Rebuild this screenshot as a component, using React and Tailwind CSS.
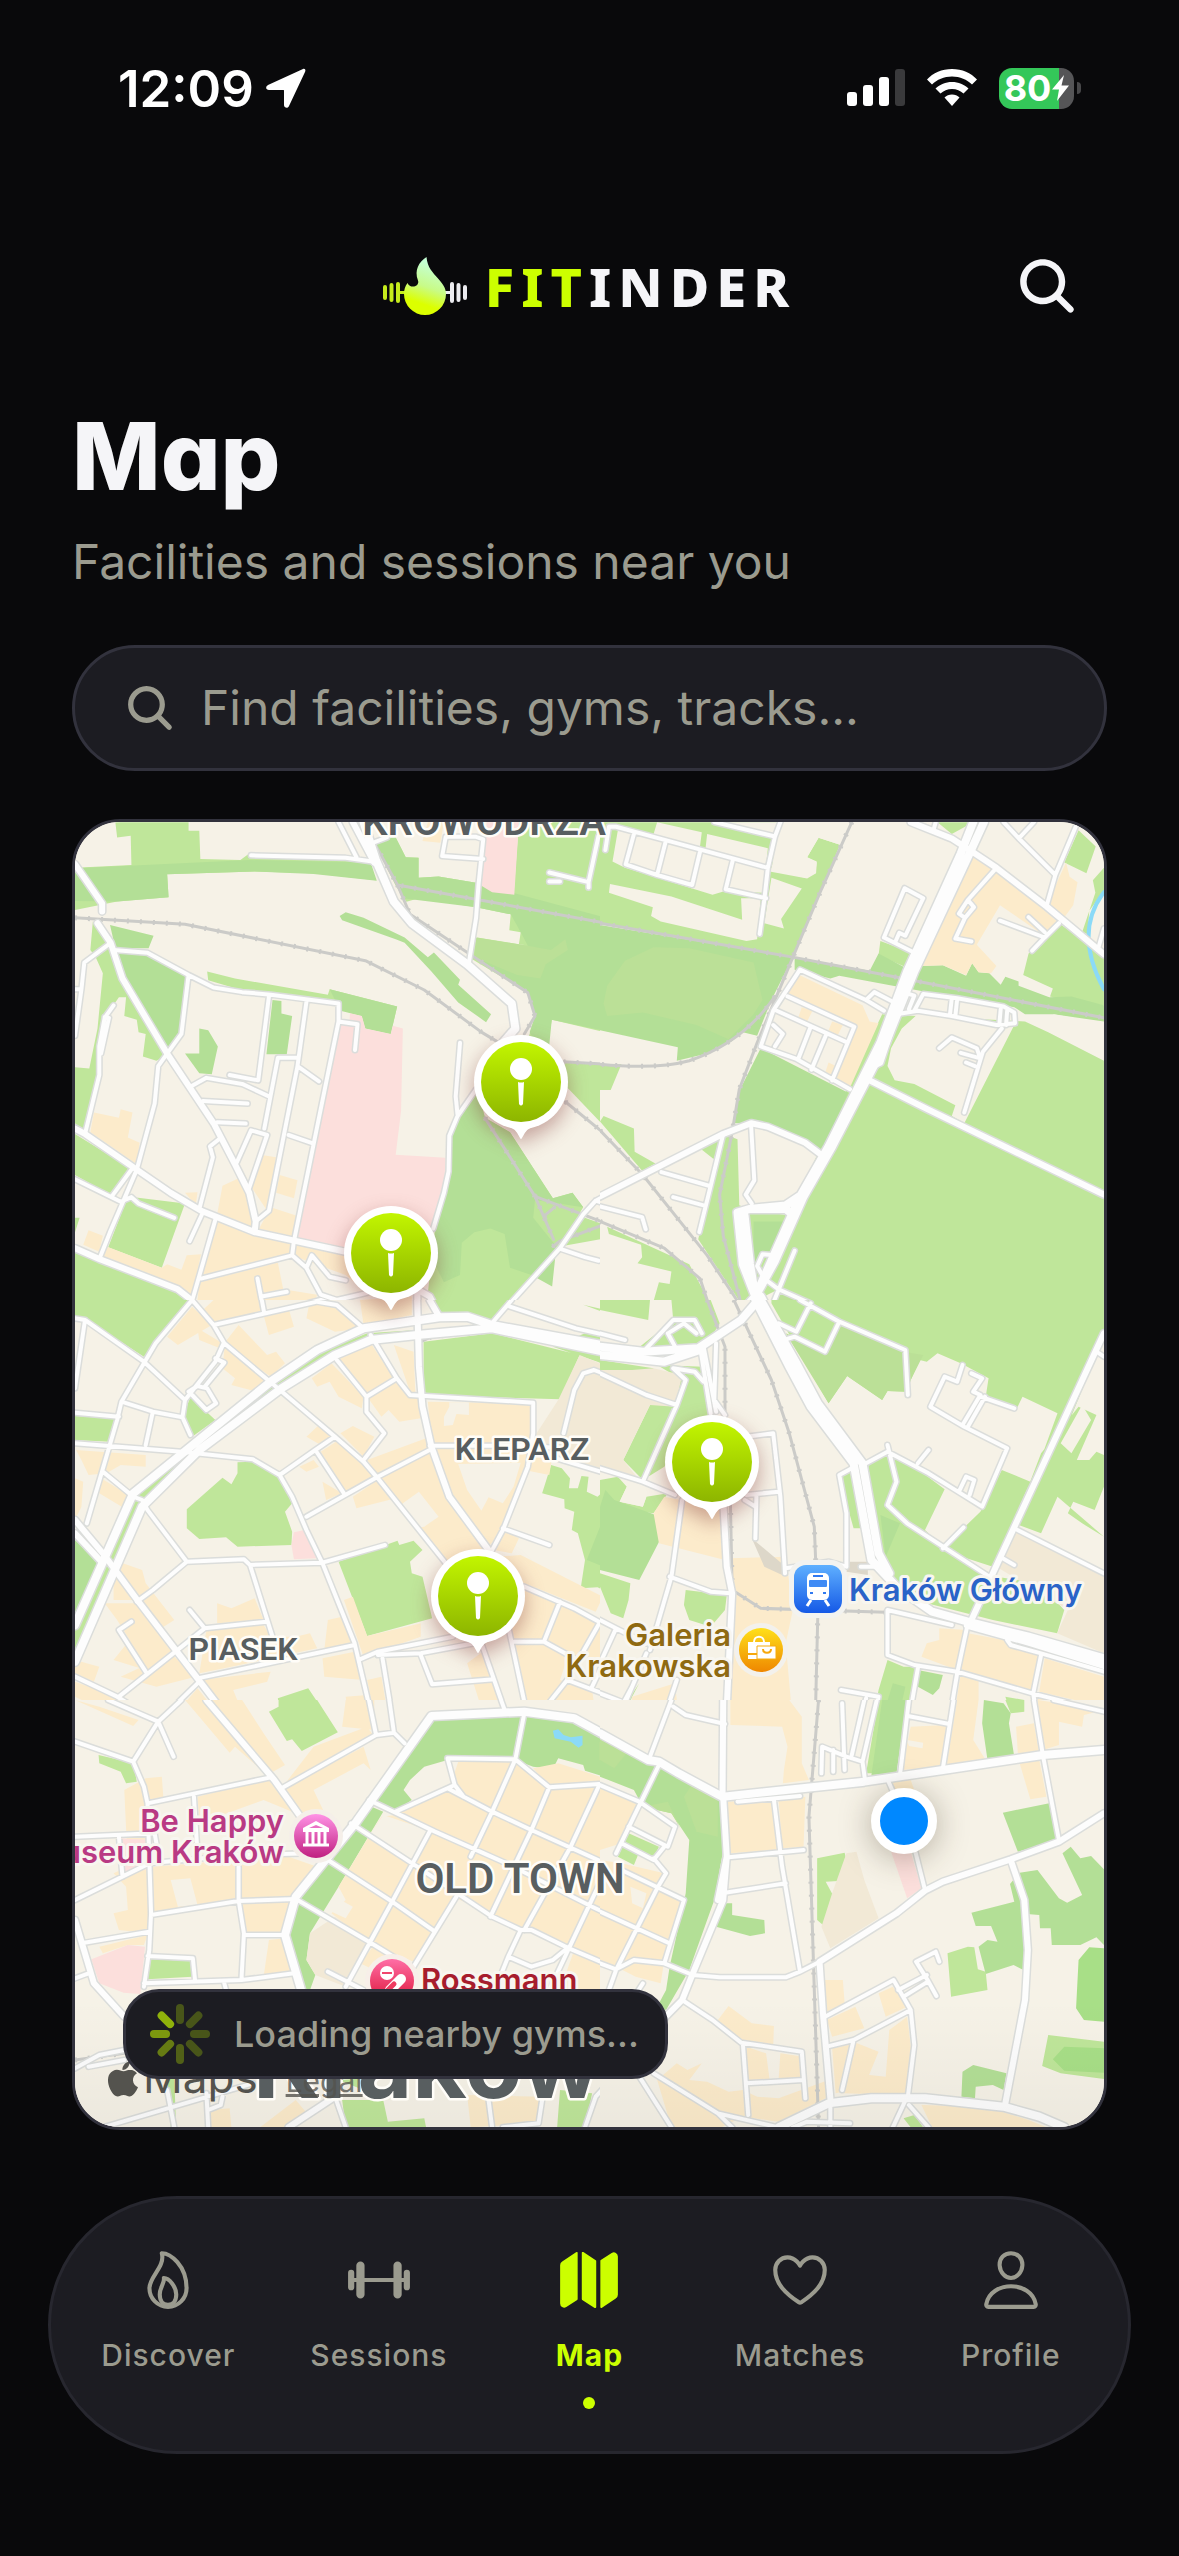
import {
  IoBarbellOutline,
  IoFlameOutline,
  IoHeartOutline,
  IoLogoApple,
  IoMap,
  IoPersonOutline,
  IoSearch,
} from 'react-icons/io5'

const TABS = [
  { label: 'Discover', Icon: IoFlameOutline },
  { label: 'Sessions', Icon: IoBarbellOutline },
  { label: 'Map', Icon: IoMap, active: true },
  { label: 'Matches', Icon: IoHeartOutline },
  { label: 'Profile', Icon: IoPersonOutline },
]

// Map space: x 75..1104, y 822..2127
const MAP = { x: 75, y: 822, w: 1029, h: 1305 }

const GYMS = [
  { id: 'north', x: 521, y: 1082 },
  { id: 'west', x: 391, y: 1253 },
  { id: 'kleparz', x: 712, y: 1462 },
  { id: 'piasek', x: 478, y: 1596 },
]

// Each tile has its own drawing units; later tiles cover the overlap of earlier ones.
const TILES = [
  {
    id: 'nw',
    x: 60,
    y: 800,
    w: 560,
    h: 560,
    units: '0 0 1568 1568',
    green: `M155 62L360 62 360 86 390 86 393 165 505 168 530 150 830 160 885 225 710 205 545 200 300 208 304 272 160 284 42 308 42 190 200 182 198 100 160 105Z
      M92 340L145 400 180 510 300 715 270 730 232 718 240 655 220 650 215 615 180 605 185 552 165 552 125 610 105 700 110 760 72 935 42 905 42 748 82 752 105 640 120 485 100 440 85 420Z
      M412 480L490 500 750 545 755 530 944 578 926 655 855 640 845 605 812 597 780 570 590 545 500 530 415 505Z
      M880 120L940 105 968 160 1004 162 1004 218 1060 214 1165 232 1270 265 1285 62 1568 62 1568 660 1377 615 1365 685 1365 735 1568 740 1568 755 1540 812 1520 812 1525 885 1568 905 1568 960 1425 810 1300 700 1330 610 1310 540 1145 440 1168 385 1310 408 1285 403 1290 370 1258 365 1262 320 1165 300 1005 275 970 285 940 240Z
      M1165 800L1190 890 1260 930 1380 1115 1435 1100 1465 1140 1400 1250 1220 1460 1060 1440 1030 1380 1050 1200 1080 1080 1090 940Z
      M1330 1120L1568 1205 1540 1225 1400 1250Z M1465 1412L1568 1437 1568 1452Z
      M42 935L195 1030 140 1105 42 1050Z M190 1110L350 1130 285 1310 135 1252Z M42 1170L55 1170 42 1210Z M42 1265L325 1380 365 1410 235 1568 60 1450 42 1445Z
      M1015 1500L1205 1490 1568 1568 1015 1568Z M700 1555L850 1490 1000 1470 1000 1495 870 1518 760 1568 680 1568Z`,
    dark: `M75 190L530 168 870 175 887 226 710 207 545 200 300 208 304 272 160 284 42 283 42 192Z
      M150 430L245 432 360 495 340 655 305 708 235 600 175 500Z M140 350L262 380 248 415 155 415Z
      M390 640L415 645 442 690 425 768 390 765 350 710 390 710Z M755 530L944 578 926 655 855 640 845 605 785 590Z
      M595 560L620 563 620 598 650 605 635 712 578 712Z
      M783 325L800 314 850 330 965 385 1030 440 1047 427 1120 503 1115 517 1207 600 1193 622 1115 567 1040 480 965 400 940 390 790 337Z
      M880 120L915 105 940 105 968 160 1004 162 1004 218 1060 214 1165 232 1568 340 1568 655 1377 615 1365 735 1315 650 1330 605 1310 535 1165 445 1310 408 1290 370 1262 320 1165 300 960 275Z
      M1165 800L1190 890 1260 930 1380 1115 1435 1100 1465 1140 1330 1120 1325 1170 1390 1250 1378 1362 1320 1330 1260 1310 1245 1215 1205 1200 1160 1210 1125 1240 1120 1330 1075 1350 1050 1300 1050 1200 1080 1080 1090 940Z`,
    soft: `M1165 385L1310 408 1375 420 1415 390 1422 420 1360 460 1345 500 1280 490 1160 440Z`,
    pink: `M1195 62L1285 62 1272 265 1210 258 1180 240Z
      M785 630L810 630 812 597 845 605 855 640 926 655 932 632 960 640 955 870 940 993 1080 1002 1075 1080 1040 1200 900 1270 790 1253 665 1225Z`,
    block: `M95 875L165 890 170 866 203 875 190 945 223 960 215 1020 85 930Z M455 1080L520 1050 545 1165 545 1205 440 1160Z
      M570 995L605 1000 580 1150 530 1075Z M615 1050L665 1065 655 1115 605 1100Z M590 1140L665 1165 655 1225 555 1205Z
      M435 1175L660 1235 800 1265 860 1380 800 1330 690 1290 650 1275 395 1340Z M390 1350L610 1295 625 1370 720 1385 715 1400 430 1470 385 1400Z
      M80 1205L120 1220 110 1265 65 1245Z M130 1250L285 1310 300 1300 340 1315 355 1275 395 1272 370 1385 115 1290Z M350 1100L385 1098 380 1135Z
      M300 1490L380 1420 420 1470 330 1525Z M390 1480L420 1470 600 1420 650 1440 650 1480 590 1500 570 1440 510 1450 520 1500 600 1560 620 1568 540 1568 430 1530Z
      M690 1430L760 1405 840 1475 770 1495 700 1470Z M840 1400L985 1390 985 1440 860 1470 780 1410Z M1000 1130L1020 1108 1055 1115 1045 1170 1000 1180Z
      M850 1568L940 1520 985 1540 985 1568Z M880 62L905 62 900 100Z M1030 62L1075 62 1065 120 1015 115Z`,
    rail: `M42 330L350 348 855 450 1020 532 1180 650 1230 680 M1190 890L1330 1110 1382 1230 M1415 845L1568 970 M880 120L945 238 1568 352
      M945 238L980 320 1310 540 1330 605 1300 655 M1330 1110L1568 1200 M1410 733L1568 742 M1380 1250L1400 1235 1520 1190 M1355 1165L1385 1140`,
    minor: `M142 400L68 455 60 530 42 660M42 530L60 530 M150 420L245 428 360 490 430 525 510 538 590 545 780 570 780 620 655 1235
      M360 490L340 655 300 710 275 745 265 850 215 1035 140 1210 110 1285 M150 575L125 610 110 690 110 770 70 935 M125 608L137 610 115 710
      M585 550L555 785 475 770M370 800L410 778 510 795 585 830 M690 565L665 745 585 1150 548 1180 M780 620L833 628 826 700
      M665 722L610 722 572 920M665 745L725 788 M400 843L525 850M440 902L520 906M640 938L710 962
      M445 950L420 970 428 1000 390 1145M400 1155L363 1235 M495 1015L535 925 580 938 530 1085 M200 1035L145 1110M42 1062L170 1125 200 1112 220 1130 320 1170
      M435 1175L385 1350 372 1395 M655 1235L650 1275 395 1340 M650 1275L690 1310 730 1385 775 1400 860 1380 M690 1310L705 1275 755 1335 800 1345
      M553 1340L572 1440M565 1390L635 1377 M420 1472L572 1440 730 1400 775 1415 850 1480 M372 1405L420 1472 455 1530 500 1568 M372 1405L270 1520 235 1568
      M42 1450L70 1460 50 1568M70 1460L220 1568 M455 1530L430 1568 M535 155L800 162 875 172M780 62L830 160 M870 122L915 105
      M1145 455L1165 330 1172 235 1185 110 1165 103M1185 165L1070 157 1080 103 1165 103 M1120 680L1108 830 1113 880
      M1165 810L1113 885 1090 940 1088 1040 1075 1100 1045 1200 M1370 203L1480 230 1508 100M1480 230L1480 245M1370 228L1400 228M1530 140L1545 95
      M1568 1085L1500 1122 1465 1160 1400 1255 1215 1460M1405 1258L1470 1280 1508 1290M1500 1122L1568 1145 M1262 1412L1445 1478 1568 1510
      M850 1480L885 1520 915 1568`,
    medium: `M42 180L118 290 118 312 M105 345L142 400 175 500 300 710 430 905 490 1020 530 1100 548 1180 545 1210 M42 920L70 935 215 1035 310 1100 395 1150 545 1210 800 1265
      M42 1255L110 1285 330 1370 368 1400 M1000 1370L1035 1390 1062 1440M1000 1350L1003 1568 M820 62L880 175`,
    major: `M850 62L885 170 935 285 985 345 1140 460 1265 570 1275 640 1240 680 M1568 1530L1215 1465 1140 1448 1000 1455 850 1485 720 1540 660 1568
      M1215 1480L1000 1500 870 1520 770 1568 M1568 1548L1215 1478`,
  },
  {
    id: 'ne',
    x: 600,
    y: 800,
    w: 560,
    h: 560,
    units: '0 0 1568 1568',
    green: `M0 62L505 62 500 150 475 200 580 220 605 205 607 175 580 160 612 106 672 125 540 440 0 345Z
      M1185 490L1200 430 1285 345 1411 435 1411 575 1320 565 1260 550 1268 528Z M785 395L878 430 860 470 780 435Z
      M1300 175L1362 205 1388 130 1340 85Z M1411 190L1380 225 1387 260 1350 370 1365 375 1370 310 1411 255Z M945 62L1045 62 985 95Z
      M790 600L1190 620 1255 650 1411 730 1411 1568 870 1568 850 1540 500 1370 440 1400 560 1100 700 790Z
      M345 935L385 950 390 1135 430 1150 545 1165 490 1280 440 1400 395 1410 275 1230Z M0 900L10 885 95 920 97 985 155 1018 118 1038Z M280 975L345 935 318 1005Z M0 740L60 740 30 812 0 812Z
      M20 1195L250 1300 330 1450 300 1490 250 1450 205 1450 130 1530 0 1520 0 1510 70 1510 72 1460 0 1440 0 1425 135 1455 165 1350 195 1355 200 1320 105 1297 118 1280 115 1245 25 1215Z`,
    dark: `M0 350L540 440 480 560 440 660 400 650 370 675 300 710 215 730 218 692 0 645Z
      M545 440L755 478 780 430 855 470 895 465 960 463 1025 492 1042 457 1060 482 1090 485 1122 517 1135 495 1172 508 1172 520 1258 552 1320 550 1411 575 1411 620 1270 600 1190 600 1160 580 900 535 820 520 670 492 645 500 545 475Z
      M450 695L695 820 620 985 425 905 375 905 390 815Z M430 1180L520 1180 490 1270 455 1270 430 1300Z`,
    soft: `M10 570L20 520 70 450 150 412 250 415 430 455 455 560 430 600 360 670 270 630 120 595 20 605Z M480 1420L500 1370 670 1460 850 1545 855 1568 560 1568Z`,
    land: `M35 172L50 85 300 140 465 185 455 260 350 255 315 265 70 190Z M160 62L285 90 280 130 150 95Z M300 95L470 135 465 185 295 140Z M310 62L505 62 495 100Z
      M500 62L700 62 672 125 612 106 580 160 607 172 603 205 575 218 480 195Z M28 235L200 270 398 335 395 275 450 275 440 390 410 395 170 340 143 325 148 300 25 260Z M480 218L565 248 507 333 515 360 460 345Z
      M845 640L900 590 1160 630 1020 905 985 885 995 855 880 795 825 785 805 745 815 695Z M1255 648L1270 600 1411 625 1411 728Z M392 960L423 910 600 985 560 1105 430 1135 393 1100Z`,
    block: `M1040 155L1110 192 1280 340 1245 380 1120 295 1055 405 1110 465 1095 485 1060 482 1042 457 1025 490 960 463 895 465Z
      M1305 175L1315 215 1337 230 1325 295 1295 335 1250 295Z M558 490L735 575 755 620 780 625 700 805 655 785 705 640 525 545Z
      M565 580L595 590 580 620 555 610Z M650 620L680 630 665 660 640 645Z M640 735L660 745 645 775 630 765Z`,
    rail: `M705 62L620 250 540 440 440 680 390 810 370 930 335 1105 345 1220 395 1410 M0 345L540 440 835 497 1411 610 M490 550Q400 680 250 730Q160 755 0 740
      M0 925L120 1050 300 1275 390 1410 450 1568 M0 1180L180 1255 280 1340 320 1460 350 1568`,
    creek: `M1411 258Q1325 370 1411 530`,
    minor: `M25 75L45 75 230 125 470 190M25 75L15 140 M95 95L72 180 160 210 258 238 280 145M183 120L160 210M372 168L352 250 465 275M320 62L490 102
      M505 62L490 102 470 190 460 280 447 375 M885 430L795 385 853 247 905 275 855 380 838 372 828 395
      M935 80L940 62M1130 62L1175 110 1275 210M1175 105L1215 62M1332 75L1275 210 1250 298 M1110 190L1030 280 1005 318 1022 330 1047 300 1030 280M1022 330L995 388 1040 396
      M1120 338L1245 385 1285 345M1200 328L1245 370M1245 385L1210 422M1395 415L1411 360
      M795 590L745 560 560 475 485 590 450 690 550 725 700 810M745 560L768 538 820 565 M525 550L712 635 650 785M495 590L690 678M590 635L555 725M632 660L592 755M485 630L512 655 490 690
      M830 600L890 590 985 605 1110 630 1162 625 1160 595 1130 578 1000 555 905 543 880 590M985 555L980 600M1000 558L995 605M1122 585L1118 630M1140 590L1137 630M855 540L880 548 865 585
      M1125 640L1072 705 1020 875 M950 695L985 665 1055 695 1065 725M1010 708L1060 722M1025 735L1050 745 M423 910L432 1065 408 1105 425 1130
      M345 935L310 1080 278 1210M172 1042L305 1080M205 1112L290 1135 M0 1138L118 1168 128 1202
      M545 1262L478 1425M500 1370L590 1410 670 1460 855 1540 858 1568M590 1410L550 1485 495 1465M670 1460L630 1545 545 1508 515 1515 M490 1275L455 1272 440 1305 460 1340 500 1370
      M130 1535L205 1455 265 1455 285 1500 290 1568M190 1495L235 1465 270 1490 280 1520M190 1495L210 1535M0 1500L70 1512`,
    medium: `M870 62L985 108 1035 140 1110 190 1250 298 1411 432 M745 780L915 865 1411 1105 M0 1110L345 935 423 905 470 915 575 960 615 990 M830 600L785 735 765 745 M1411 1500L1380 1568`,
    major: `M1045 62L1010 150 860 480 785 680 640 970 560 1110 480 1290 435 1390 M1075 62L1030 160 880 480 800 680 650 970 570 1110 490 1290 435 1390 380 1450 280 1530 180 1545
      M435 1390L480 1470 530 1568M450 1390L545 1568 M565 1105L520 1135 420 1145 385 1155 400 1300 435 1390M405 1165L420 1300 435 1390M420 1145L520 1145 545 1165 M0 1535L130 1548 270 1540`,
  },
  {
    id: 'w',
    x: 60,
    y: 1300,
    w: 560,
    h: 460,
    units: '0 0 1568 1380',
    green: `M42 0L365 0 235 170 70 55 42 50Z M42 348L160 355 140 425 42 420Z M365 290L435 360 370 410 345 350Z
      M497 487L540 485 610 530 650 610 630 635 650 695 648 735 497 740 465 712 390 717 355 685 355 628 455 533 480 553 497 520Z
      M780 785L945 722 950 735 990 722 1015 750 980 785 985 820 1015 830 1042 955 860 1008Z M1018 125L1210 100 1455 165 1400 298 1018 285Z
      M590 260L720 160 860 100 1210 75 1000 100 880 115 620 265 380 460 230 610 42 1060 42 980 200 600Z M1050 0L1260 0 1210 70 1062 50Z
      M585 1235L612 1220 610 1195 695 1165 725 1213 737 1210 778 1297 677 1353 650 1318 635 1323Z
      M1375 495L1405 505 1428 535 1425 565 1450 565 1460 528 1480 530 1475 575 1505 590 1528 568 1545 600 1568 550 1568 950 1540 935 1550 885 1505 862 1458 865 1470 780 1450 700 1433 690 1440 635 1413 625 1412 598 1350 580Z
      M1465 14L1568 40 1568 55Z M1470 100L1568 125 1568 215 1505 185 1380 140Z M108 1365L160 1380 110 1380Z`,
    dark: `M42 720L115 790 42 950Z M1568 530L1475 780 1568 820Z M1040 1255L1295 1245 1440 1260 1568 1340 1568 1380 940 1380Z`,
    pink: `M655 697L685 690 718 775 655 778 648 735Z`,
    tan: `M1455 165L1568 215 1568 520 1430 480 1310 440 1395 300Z`,
    water: `M1380 1290L1395 1288 1410 1305 1430 1312 1463 1305 1463 1335 1452 1343 1430 1325 1385 1315Z`,
    block: `M430 0L560 0 565 35 430 70 400 30Z M385 85L455 130 580 240 550 275 480 255 490 235 455 205 460 150 390 120Z M370 20L425 75 330 135 300 110Z
      M460 130L500 75 580 165 605 155 630 190 590 230Z M570 45L640 25 655 80 585 105Z M700 0L740 0 850 85 770 95 690 55Z M840 0L985 0 985 45 850 75Z
      M775 180L870 130 935 235 860 285Z M705 235L760 190 850 290 845 325 780 290 755 245 720 260Z M860 290L940 245 975 290 1005 290 1010 355 950 365 920 330 900 350Z M935 135L990 155 995 280 980 275Z
      M690 410L725 375 765 410 730 435Z M785 400L820 378 880 410 850 470Z M860 480L1025 415 1040 450 890 525Z M730 455L780 420 850 480 885 525 800 575Z M735 545L790 580 745 600Z M820 590L890 540 940 595 830 625Z
      M895 530L1035 460 1085 580 1200 745 1140 830 1080 780Z M1030 305L1325 310 1320 430 1040 430Z M1040 440L1330 430 1380 460 1370 525 1300 510 1240 690 1200 740 1100 600Z
      M1225 770L1290 765 1520 890 1500 935 1300 850Z M1290 860L1400 905 1355 1020 1260 1020Z M1400 910L1568 990 1568 1080 1430 1070 1360 1025Z
      M1275 1030L1350 1030 1420 1075 1400 1140 1490 1170 1495 1210 1525 1230 1500 1265 1310 1220Z M1140 1090L1190 1050 1245 1220 1180 1225Z M1240 690L1285 715 1265 760 1215 750Z
      M150 780L230 810 240 850 320 960 290 980 310 1050 220 900 150 900Z M125 910L210 910 315 1050 240 1110 150 1080 195 1020 160 960Z M170 1130L310 1060 380 1130 270 1160Z
      M440 910L480 925 545 895 570 960 440 970Z M410 990L570 975 590 1010 660 1010 700 1000 720 1045 480 1100 390 1120Z M750 960L790 950 820 1035 740 1050Z M795 900L820 890 860 1008 1010 970 1010 1010 850 1070Z
      M735 1075L825 1055 850 1140 740 1130Z M860 1140L900 1130 925 1290 890 1300Z M390 1140L590 1115 580 1145 485 1170 545 1330 630 1380 560 1380Z M345 1215L385 1165 545 1380 470 1360 390 1250Z
      M42 1145L160 1190 220 1245 205 1275 42 1190Z M42 1080L110 1100 95 1145 42 1120Z M800 1190L860 1185 880 1300 750 1380 710 1340 810 1280Z M760 1375L890 1310 920 1370 900 1380Z
      M45 450L240 465 240 500 170 495 130 520 80 525 60 480Z M42 535L65 545 60 620 42 660Z M115 535L200 590 180 625 110 580Z M670 500L710 480 725 500 690 515Z`,
    land: `M1075 350L1090 320 1090 307 1145 307 1145 345 1110 342 1100 375 1075 378Z M1115 492L1290 488 1270 560 1240 610 1200 592 1180 632 1140 570Z M960 610L1005 575 1060 650 1020 680 950 690Z`,
    rail: `M1000 130L1040 110 1205 95`,
    minor: `M42 55L70 60 235 185 350 300M70 60L42 265 M370 0L268 130 235 190 172 305 160 360 75 670 M42 338L165 350M42 430L340 455 540 478 615 525 650 590 690 690 735 790 825 1030 885 1305
      M172 305L260 335 343 352 365 405M260 335L240 435M343 352L350 300 435 185 458 130 M435 175L460 188 405 260M360 275L385 258 412 265 437 310 410 330 370 285
      M370 0L430 75 460 130 610 265 770 410 850 485 890 535 1080 790 M430 75L720 5 775 15 850 85M572 40L565 0 M775 180L858 290 858 335 908 400 850 480M858 290L943 235
      M870 105L943 235 980 285 1325 308 1325 400 1310 500 1240 690 1205 760 M770 410L715 450 615 525M715 450L795 580 M690 650L890 530 1035 450M1035 437L1310 437 1400 445 M1240 685L1370 735
      M120 515L205 590 230 600 245 630 355 785 515 778 532 795 735 788 910 735 M355 785L260 870 215 905M532 795L595 1010 M363 930L405 985 578 965M405 985L165 1190 M200 965L165 990 240 1115
      M385 1135L825 1035 M840 1078L890 1055 1100 1010M890 1065L1010 1060 1160 1030M903 1075L937 1295M1010 1065L1042 1153 1215 1138M1180 1030L1245 1230M1255 980L1305 1230
      M1270 1025L1355 1025 1400 905M1355 1025L1440 1075M1300 860L1440 925 1568 1000M1510 970L1420 1140 1368 1210M1420 1140L1568 1200 1540 1300M1560 1000L1490 1160
      M42 1130L160 1190 275 1265 385 1150M275 1265L205 1380M275 1265L318 1370M42 1325L200 1380 M750 1380L885 1305 935 1298 965 1330
      M1410 400L1440 270 1465 220 1495 210 1568 240M1390 475L1530 520 1568 525 M1300 1240L1275 1380M1085 1375L1270 1375 M1260 20L1445 85 1568 115M1205 75L1265 0`,
    medium: `M42 660L120 760 220 905 385 1135 560 1380 M1000 0L1005 200 1015 320 1040 440 1090 590 1200 750 M42 700L120 790 M940 1380L965 1335 1035 1250 1300 1235 1440 1260 1568 1335 M1035 0L1062 50`,
    major: `M1568 145L1210 75 1140 50 1062 52 850 85 720 150 590 245 205 580 42 975 M1568 165L1210 85 1000 105 870 120 770 165 620 265 390 450 230 620 42 1085`,
  },
  {
    id: 'e',
    x: 600,
    y: 1300,
    w: 560,
    h: 460,
    units: '0 0 1568 1380',
    green: `M0 0L140 0 135 60 0 30Z M480 0L1411 0 1411 110 1300 400 1240 460 1281 340 1183 290 1165 330 1080 290 1088 235 1010 190 945 160 915 185 895 180 870 240 860 275 805 273 790 300 692 228 640 310 480 10Z
      M100 150L205 60 200 0 310 0 335 70 290 150Z M140 315L215 230 160 195 290 200 315 350 180 500 120 540 65 480Z M0 180L150 205 140 225 90 212 0 210Z
      M670 530L705 510 735 685 710 685Z M750 490L800 450 830 470 880 500 965 568 910 690 960 740 1110 830 1230 850 1300 930 1280 1000 1100 960 880 900 800 800 770 640Z
      M1125 510L1205 545 1100 800 955 750 1065 635Z M1235 460L1340 320 1390 345 1335 480 1370 480 1390 455 1411 465 1411 560 1385 630 1325 605 1310 640 1350 670 1411 710 1281 590 1235 700 1160 670Z
      M0 540L50 530 75 560 55 605 120 620 130 590 190 580 150 640 0 620Z M0 820L85 850 80 900 65 955 30 940 0 860Z M240 870L355 885 350 930 310 980 250 960 235 915Z
      M805 1080L850 1100 885 1100 840 1380 740 1380 780 1170Z M60 1230L110 1150 90 1190 40 1310Z M0 1320L60 1350 100 1380 0 1380Z M1135 1190L1188 1200 1188 1235 1150 1240Z`,
    dark: `M0 620L15 570 40 600 170 650 185 685 110 840 0 810Z M820 1150L855 1160 810 1380 755 1380Z M890 1110L960 1125 950 1165 932 1185 890 1160Z
      M1080 1200L1130 1210 1145 1270 1158 1370 1085 1380 1070 1260Z M785 645L840 670 800 770Z`,
    soft: `M520 100L640 155 675 70 850 155 905 165 870 240 860 275 805 273 790 300 692 228 640 310Z`,
    tan: `M0 210L90 210 150 205 230 225 210 320 140 315 65 480 110 540 0 500Z M1165 690L1411 830 1411 1060 1280 1000 1310 930 1110 800Z`,
    road: `M425 715L520 800 510 825 460 800Z M700 785L750 785 750 825 690 815Z`,
    block: `M180 590L225 600 230 560 340 600 350 780 165 730 150 640Z M365 775L520 770 540 930 520 1030 535 1210 515 1275 365 1280Z M90 1190L210 1150 215 1200 160 1270 85 1250Z M510 1290L565 1250 565 1380 520 1380Z
      M950 985L1025 990 1000 1110 900 1070 915 1030 950 1020Z M1030 1000L1130 1020 1230 1060 1210 1170 1010 1115Z M1010 1125L1060 1130 1060 1250 1080 1380 970 1380Z M870 1255L975 1280 960 1380 860 1380Z
      M1245 1075L1411 1130 1411 1220 1230 1175Z M1225 1190L1360 1225 1355 1280 1290 1270 1280 1340 1245 1380Z M1165 1280L1220 1275 1235 1370 1170 1370Z`,
    land: `M1290 430L1350 315 1375 360 1320 460Z M75 560L130 590 120 620 55 605Z`,
    rail: `M375 0L480 240 530 400 600 680 610 940 600 1380 M300 0L350 140 350 340 M365 600L370 870 450 925 800 937`,
    minor: `M0 220L130 285 215 315M120 545L215 315 240 240 205 205 M0 505L120 545 210 585 M230 600L200 830 140 1050M195 830L310 875 365 880 M410 410L485 400 505 590 518 820M410 585L500 575M438 590L435 715M405 600L435 620
      M520 805L640 785 690 800 690 640 670 525 705 505 M130 145L205 60 265 60 285 100M190 100L235 70 270 100M190 100L210 140M0 100L70 120 M280 140L310 340M290 140L325 335M325 130L320 300 350 345M205 205L265 215 290 245
      M500 70L550 95 590 10M515 120L545 110 630 155 670 65M560 0L670 65 855 150 862 285 M745 490L805 455 920 520 1010 580 1070 620 1140 445 1020 380 925 320 965 230 1000 245 1015 195
      M805 435L830 545 805 615 860 670 1090 830 M890 490L920 450M1005 575L1025 530 1048 540 1035 585 M1015 375L1065 285 1045 275 1070 235 1040 220M1065 290L1160 325M1030 380L1078 290 M960 745L1018 682M1160 685L1411 820M1120 770L1160 795
      M1390 155L1411 170 M985 975L805 930 805 1065 880 1095 1000 1115 1210 1180 1411 1235 M1028 980L1000 1120 960 1380M890 1105L845 1380M862 1248L980 1270M1140 1020L1150 1035 1235 1060 1411 1115M1235 1065L1213 1180 1240 1370M1240 1365L1411 1350
      M675 1170L780 1190 740 1380M745 1195L705 1380M680 1215L683 1380M620 1380L622 1340 710 1375 M0 960L45 985 0 1090M45 985L130 1030M0 1180L60 1205M130 1060L30 1310M215 1140L140 1380M200 1225L250 1250 350 1275M90 1160L25 1290
      M770 800L730 800`,
    medium: `M345 600L355 800 370 880 348 1380M0 1295L150 1380 M1411 100L1385 160 1100 820 1040 960`,
    major: `M0 140L120 155 275 145 395 60 435 10 M0 165L180 185 280 150 M435 0L530 200 590 320 710 490 760 780 830 860 930 935 1030 965 1200 1010 1411 1075
      M450 0L550 190 610 310 735 490 780 760 810 820 M1030 975L1200 1025 1411 1095`,
  },
  {
    id: 'sw',
    x: 60,
    y: 1700,
    w: 560,
    h: 460,
    units: '0 0 1568 1380',
    green: `M585 35L612 20 612 0 720 0 778 97 677 153 650 118 635 123Z M108 165L205 190 215 245 185 250 170 215 110 190Z M250 778L365 782 370 830 245 838Z
      M790 1200L905 1200 918 1265 1020 1255 1025 1282 800 1282Z M1400 1170L1490 1180 1470 1282 1392 1282Z M300 1130L320 1130 325 1282 310 1282Z M780 1140L860 1135 850 1170Z`,
    dark: `M1040 55L1295 45 1440 60 1568 130 1568 245 1470 212 1465 195 1395 175 1380 208 1325 200 1275 180 1085 180 1020 200 980 240 962 270 985 300 930 340 875 300Z
      M850 310L905 335 780 560 700 700 690 780 715 825 700 870 670 870 635 705 670 600 830 380 810 370Z`,
    soft: `M1510 125L1568 150 1568 200 1540 205 1510 180Z`,
    pink: `M88 778L190 735 238 740 225 882 178 878 110 850Z M165 415L260 420 240 510 180 515Z`,
    tan: `M770 650L865 720 800 860 715 825 690 780 700 700Z`,
    water: `M1380 92L1395 88 1410 105 1430 112 1463 107 1463 135 1452 143 1430 125 1385 115Z`,
    block: `M1115 185L1275 185 1320 225 1370 265 1510 255 1568 280 1568 800 1410 740 1290 685 1100 590 1050 700 1000 790 860 725 760 640 800 600 780 560 870 400 900 350 940 345 1090 265Z
      M880 735L1000 800 980 860 840 790Z M1440 750L1568 810 1568 870 1400 870Z M1325 205L1395 190 1470 215 1568 250 1568 275 1510 250 1370 260Z
      M350 0L390 50 475 158 490 140 580 225 630 195 570 100 510 0Z M710 140L860 80 880 110 620 265Z M620 270L850 140 870 210 850 190 710 270 750 360 670 350Z M385 290L580 235 660 340 570 300 440 350 390 360Z
      M180 270L240 235 285 230 290 300 240 310 250 640 250 700 165 690 150 640 190 630 185 560 150 520 190 500Z M260 500L490 480 495 600 260 640Z M510 600L655 600 630 700 515 700Z M400 460L640 470 720 500 660 590 510 600 400 600Z
      M585 720L630 715 655 820 570 830Z M110 740L245 705 235 735 190 735 120 760Z M420 1230L475 1225 480 1282 410 1282Z M560 1282L660 1200 700 1250 660 1282Z M1140 1185L1350 1190 1330 1270 1150 1282Z M42 0L110 20 220 60 205 78 42 0Z M800 0L880 0 880 90 790 80Z`,
    land: `M905 345L1030 390 990 485 870 400Z M1110 600L1285 690 1240 810 1000 790Z M770 590L820 620 800 655 750 630Z M310 540L365 535 385 615 330 620Z M1265 770L1320 800 1400 750 1380 800 1300 860 1240 850Z`,
    rail: `M42 1080L180 1060`,
    minor: `M275 65L135 0M275 65L340 0M275 65L318 170M42 125L205 185 275 65M205 185L235 260 245 310 255 640 250 750 235 860 M245 310L590 232M375 290L385 460M42 410L265 400 270 430M165 410L175 530M42 600L250 490 500 465 700 460M500 500L500 600 515 700 508 840
      M255 645L500 603 660 597M60 730L250 695M515 705L630 705M245 768L372 775 378 840M235 850L508 840 655 820M42 835L80 820M460 850L465 870
      M620 265L885 105 935 98 965 130M885 105L865 0M935 98L922 0M1245 30L1235 0 M1300 40L1275 178 1085 175 1105 255 940 335 M865 300L1050 395 1250 490 1490 620 1568 660 M815 370L1000 500 1210 650 1290 690 1320 690 1425 745 1568 810
      M750 480L930 605 1050 695 M665 600L865 725 980 800 M1085 265L1210 335 1320 390 1568 510M1105 255L1130 290 M1275 178L1210 335 1150 470M1035 395L930 605 800 860M1110 590L990 800
      M1275 178L1370 262 1510 252 1568 280M1370 262L1320 390 1205 650M1510 255L1430 440 1300 690M1568 420L1425 745 1370 870M1290 690L1255 770 1320 800 1380 780 1425 740M1255 770L1225 850M750 815L850 870
      M42 1105L110 1065 180 1050M80 1100L180 1080M120 1282L540 1150M300 1170L320 1282M410 1180L415 1282M415 1230L450 1215 455 1190M770 1190L800 1282M1200 1200L1210 1282M1350 1200L1340 1270 1240 1282M1470 1282L1500 1190 1568 1110`,
    medium: `M410 0L600 240 680 360 M42 660L95 850 180 950 M640 1282L770 1190`,
    major: `M1568 130L1440 55 1300 35 1040 48 830 365 660 590 630 705 675 870`,
  },
  {
    id: 'se',
    x: 600,
    y: 1700,
    w: 560,
    h: 460,
    units: '0 0 1568 1380',
    green: `M235 290L260 250 330 300 330 410 270 395Z M608 475L685 458 695 505 678 542 632 545 652 585 635 685 608 660Z M973 760L1030 740 1048 742 1058 808 1080 815 1085 870 983 890Z
      M1255 1005L1411 1025 1411 1137 1290 1120 1238 1098Z M80 400L165 440 150 475 110 455 95 495 50 470Z M850 1255L880 1245 905 1282 870 1282Z M1135 0L1188 0 1188 35 1150 40Z M745 220L780 0 830 0 790 220Z`,
    dark: `M0 100L165 190 340 290 345 450 320 600 250 810 185 930 160 920 185 870 195 800 240 580 250 420 200 340 120 320 95 270 0 230Z
      M790 0L860 0 830 220 760 225Z M1075 0L1130 10 1150 40 1145 70 1160 170 1085 180 1070 70Z M1128 338L1258 310 1280 420 1170 455Z M345 610L370 610 370 645 460 660 462 700 420 708 325 680Z
      M1040 638L1160 605 1148 552 1175 518 1225 510 1285 595 1308 608 1350 585 1295 460 1318 440 1345 475 1375 468 1411 508 1411 735 1390 712 1345 735 1265 735 1262 685 1232 685 1230 645 1195 642 1195 815 1158 795 1080 822 1060 740 1085 720 1113 725 1095 678 1052 678Z
      M1015 1115L1045 1095 1138 1120 1130 1170 1100 1155 1052 1160 1050 1195 1012 1190Z`,
    soft: `M0 110L75 160 40 205 0 180Z M235 290L260 250 330 300 330 410 270 395Z M120 320L190 305 225 385 200 340Z`,
    pitch: `M1340 780L1370 742 1411 745 1411 965 1355 960 1333 925Z M1268 1078L1300 1040 1411 1045 1411 1118 1300 1112Z`,
    pink: `M815 455L870 455 900 565 860 595Z`,
    tan: `M690 460L718 455 740 540 780 655 645 745 620 680 650 580Z`,
    block: `M0 250L105 310 60 430 0 450Z M60 490L180 520 150 560 230 600 200 720 180 780 170 850 100 830 45 800 0 780 0 480Z M350 305L485 300 500 450 360 460Z M500 300L575 290 570 440 510 445Z
      M365 0L530 0 565 50 565 190 585 240 512 250 515 210 525 140 510 80 365 75Z M870 80L970 75 955 200 845 210Z M1000 0L1060 0 1045 120 1080 180 970 195Z M1165 80L1215 70 1230 160 1170 160Z M1175 190L1230 180 1250 290 1205 298Z
      M1225 0L1411 30 1355 45 1350 80 1285 65 1285 135 1240 150Z M820 240L870 240 880 270 820 270Z M630 840L680 840 685 910 625 940Z M635 960L715 920 740 985 650 1010Z M780 880L820 860 860 920 800 950Z
      M810 990L860 950 875 1080 860 1185 680 1180 710 1120 800 1130Z M650 1045L720 1030 780 1055 740 1160 660 1180Z M330 960L360 918 425 970 487 978 485 1040 400 1025Z M410 1040L465 1060 475 1140 415 1140Z M505 1060L570 1070 570 1140 500 1140Z
      M160 1140L215 1090 245 1110 285 1090 250 1140 300 1145 360 1175 400 1170 440 1190 500 1195 640 1140 640 1190 500 1265 400 1250 340 1282 200 1282Z M900 1215L1080 1220 1200 1260 1250 1282 930 1282Z`,
    land: `M85 560L130 580 120 625 90 610Z M860 120L905 128 903 145 865 138Z`,
    rail: `M612 0L585 350 612 1282`,
    minor: `M205 20L240 45 350 72M200 0L140 170M0 255L110 305 210 380 190 440 80 380M165 195L45 460M60 430L150 480 180 440M150 475L185 520 160 565 45 810 25 870M60 510L235 600 200 720 180 790M0 635L195 730
      M0 790L45 808 95 780 180 790 260 825 335 832 520 832 560 815 615 785M385 305L560 288M487 300L510 500 560 815M360 472L570 450M350 578L520 550 M260 820L230 900 315 960 395 1028 565 1055 575 1195M400 1030L415 1245M410 1150L570 1140
      M150 1120L330 1240 500 1282M330 1240L370 1282M110 1130L200 1282 M620 220L622 140 690 170 735 185M653 150L653 215M678 10L685 210M740 0L705 165M775 0L735 185 742 240
      M865 0L840 225M862 48L978 72M990 0L960 205M1215 0L1240 165 1285 420M1270 0L1411 35 M808 245L870 400 910 570 M630 950L822 840 870 930 880 1035 862 1190M870 930L710 1020 635 1040M710 1020L678 1170M835 870L915 825M850 890L918 845
      M950 785L940 755 885 785 920 845 942 888 M108 870L120 850M860 1190L820 1282M865 1215L920 1282M645 1200L645 1282M540 1282L580 1265 700 1270`,
    medium: `M345 0L343 290 M615 790L625 950 645 1195 M1150 480L1188 600 1198 750 1190 900 1135 1210 M615 785L830 640 910 572 960 545 1150 478 1285 425 1411 340 M345 290L355 470 345 600 260 820 230 900 175 960M355 470L330 600`,
    major: `M345 290L740 245 960 210 1240 165 1411 150 M0 100L135 180 165 185 220 220 345 292 M500 1282L640 1210 760 1195 910 1195 1130 1220 1230 1250 1300 1282`,
  },
]

const AREAS = [
  ['block', '#fcebcb'],
  ['land', '#f6f2e7'],
  ['tan', '#f2e9d6'],
  ['pink', '#fcdfdc'],
]

function MapTile({ tile }) {
  const line = { fill: 'none', strokeLinecap: 'round', strokeLinejoin: 'round', vectorEffect: 'non-scaling-stroke' }
  return (
    <svg x={tile.x} y={tile.y} width={tile.w} height={tile.h} viewBox={tile.units} preserveAspectRatio="none">
      <rect width="1568" height="1568" fill="#f6f2e7" />
      <path d={tile.green} fill="#bfe69a" />
      <path d={tile.dark} fill="#b3df96" />
      {tile.soft && <path d={tile.soft} fill="#bbe097" />}
      {tile.pitch && <path d={tile.pitch} fill="#a8df87" />}
      {AREAS.map(([key, fill]) => (tile[key] ? <path key={key} d={tile[key]} fill={fill} /> : null))}
      {tile.water && <path d={tile.water} fill="#8bdaf7" />}
      {tile.creek && <path d={tile.creek} {...line} stroke="#8bdaf7" strokeWidth="4" />}
      {tile.road && <path d={tile.road} fill="#ddd7c9" />}
      <path d={tile.rail} {...line} stroke="#cbcbc8" strokeWidth="3" />
      <path d={tile.rail} {...line} strokeLinecap="butt" stroke="#cbcbc8" strokeWidth="5" strokeDasharray="2 11" />
      <path d={tile.minor} {...line} stroke="#dbdddb" strokeWidth="7" />
      <path d={tile.medium} {...line} stroke="#dbdddb" strokeWidth="9" />
      <path d={tile.major} {...line} stroke="#dbdddb" strokeWidth="11" />
      <path d={tile.minor} {...line} stroke="#fdfdfd" strokeWidth="4" />
      <path d={tile.medium} {...line} stroke="#fdfdfd" strokeWidth="6" />
      <path d={tile.major} {...line} stroke="#fdfdfd" strokeWidth="8" />
    </svg>
  )
}

function District({ x, y, children, className }) {
  return (
    <text
      x={x}
      y={y}
      textAnchor="middle"
      fill="#585e60"
      stroke="#fffdf8"
      strokeWidth="5"
      strokeLinejoin="round"
      paintOrder="stroke"
      className={className}
    >
      {children}
    </text>
  )
}

function PlaceLabel({ x, y, color, anchor = 'end', children }) {
  return (
    <text
      x={x}
      y={y}
      textAnchor={anchor}
      fill={color}
      stroke="#f8f6f0"
      strokeWidth="6"
      strokeLinejoin="round"
      paintOrder="stroke"
      className="text-[31px] font-semibold"
    >
      {children}
    </text>
  )
}

function CityMap() {
  return (
    <svg
      viewBox="75 822 1029 1305"
      className="block h-auto w-full"
      role="img"
      aria-label="Map of Kraków"
    >
      <defs>
        <linearGradient id="train" x1="0" y1="0" x2="0" y2="1">
          <stop offset="0" stopColor="#5fb0ff" />
          <stop offset="1" stopColor="#1559e6" />
        </linearGradient>
        <linearGradient id="mall" x1="0" y1="0" x2="0" y2="1">
          <stop offset="0" stopColor="#ffe01a" />
          <stop offset="1" stopColor="#ef8700" />
        </linearGradient>
        <linearGradient id="museum" x1="0" y1="0" x2="0" y2="1">
          <stop offset="0" stopColor="#ff93e6" />
          <stop offset="1" stopColor="#c01f80" />
        </linearGradient>
        <linearGradient id="pharmacy" x1="0" y1="0" x2="0" y2="1">
          <stop offset="0" stopColor="#ff6ea6" />
          <stop offset="1" stopColor="#dd1437" />
        </linearGradient>
        <linearGradient id="fade" x1="0" y1="0" x2="0" y2="1">
          <stop offset="0" stopColor="#000" stopOpacity="0" />
          <stop offset="1" stopColor="#000" stopOpacity="0.04" />
        </linearGradient>
      </defs>

      {TILES.map((tile) => (
        <MapTile key={tile.id} tile={tile} />
      ))}
      <rect x="75" y="2000" width="1029" height="127" fill="url(#fade)" />

      <g className="font-['Roboto',sans-serif] font-semibold">
        <District x="484" y="835" className="text-[40px]">KROWODRZA</District>
        <District x="522" y="1460" className="text-[32px]">KLEPARZ</District>
        <District x="243" y="1660" className="text-[32px]">PIASEK</District>
        <District x="520" y="1893" className="text-[42px]">OLD TOWN</District>
      </g>
      <District x="427" y="2098" className="text-[94px] font-bold">Kraków</District>

      {/* train station */}
      <rect x="789" y="1560" width="58" height="58" rx="16" fill="#f3f3f0" />
      <rect x="794" y="1565" width="48" height="48" rx="12" fill="url(#train)" />
      <rect x="807" y="1573" width="22" height="27" rx="5" fill="#fff" />
      <rect x="809" y="1580" width="18" height="7" rx="1" fill="#3f8bf5" />
      <path d="M813 1576h10M810 1593h3M823 1593h3" stroke="#3079f0" strokeWidth="2" />
      <path d="M811 1600l-4 6M825 1600l4 6" stroke="#fff" strokeWidth="3" />
      <PlaceLabel x="849" y="1601" color="#2a63c8" anchor="start">Kraków Główny</PlaceLabel>

      {/* shopping mall */}
      <circle cx="761" cy="1650" r="27" fill="#f3f1ec" />
      <circle cx="761" cy="1650" r="22" fill="url(#mall)" />
      <path d="M748 1642h22v17h-22z" fill="#fff" />
      <path d="M754 1642c0-7 10-7 10 0" fill="none" stroke="#fff" strokeWidth="2" />
      <path d="M757 1646h19v13h-19z" fill="#fff" stroke="#f6ab0c" strokeWidth="1" />
      <path d="M763 1649c0 5 8 5 8 0M748 1654h9" fill="none" stroke="#f6a80c" strokeWidth="2" />
      <PlaceLabel x="731" y="1646" color="#8f6a12">Galeria</PlaceLabel>
      <PlaceLabel x="731" y="1677" color="#8f6a12">Krakowska</PlaceLabel>

      {/* museum */}
      <circle cx="316" cy="1836" r="27" fill="#f5efe9" />
      <circle cx="316" cy="1836" r="22" fill="url(#museum)" />
      <path d="M316 1821l13 7v4h-26v-4z" fill="#fff" />
      <path d="M309 1828l7-3 7 3z" fill="#ea70c5" />
      <path d="M307 1832v12M313 1832v12M319 1832v12M325 1832v12" stroke="#fff" strokeWidth="3" />
      <path d="M303 1845h26" stroke="#fff" strokeWidth="3" />
      <PlaceLabel x="284" y="1832" color="#b93a84">Be Happy</PlaceLabel>
      <PlaceLabel x="284" y="1863" color="#b93a84">Museum Kraków</PlaceLabel>

      {/* pharmacy */}
      <circle cx="392" cy="1981" r="27" fill="#f7efe9" />
      <circle cx="392" cy="1981" r="22" fill="url(#pharmacy)" />
      <circle cx="387" cy="1973" r="7" fill="#fff" />
      <path d="M382 1973h10" stroke="#f0466e" strokeWidth="2" />
      <path d="M390 1990l11-11" stroke="#fff" strokeWidth="10" strokeLinecap="round" />
      <path d="M387 1991l7-7" stroke="#ee3a60" strokeWidth="5" strokeLinecap="round" />
      <PlaceLabel x="421" y="1991" color="#a71d2d" anchor="start">Rossmann</PlaceLabel>
    </svg>
  )
}

function at({ x, y }) {
  return {
    left: `${((x - MAP.x) / MAP.w) * 100}%`,
    top: `${((y - MAP.y) / MAP.h) * 100}%`,
  }
}

function GymPin({ gym }) {
  return (
    <button
      type="button"
      aria-label="Gym"
      style={at(gym)}
      className="absolute -translate-x-1/2 -translate-y-1/2 drop-shadow-[0_8px_10px_rgba(120,40,40,0.4)]"
    >
      <svg viewBox="-60 -60 120 120" className="block size-[120px]" aria-hidden="true">
        <defs>
          <linearGradient id={`pin-${gym.id}`} x1="0" y1="0" x2="0" y2="1">
            <stop offset="0" stopColor="#c2f500" />
            <stop offset="1" stopColor="#8db500" />
          </linearGradient>
        </defs>
        <circle r="47" fill="#fff" />
        <path d="M-17 42Q-5 46 -1 56Q0 58 1 56Q5 46 17 42Z" fill="#fff" />
        <circle r="40" fill={`url(#pin-${gym.id})`} />
        <circle cy="-13" r="11" fill="#fff" />
        <path d="M-3 0Q0 1 3 0L2 22Q0 25 -2 22Z" fill="#fff" />
      </svg>
    </button>
  )
}

function Spinner() {
  const spokes = [0.25, 0.25, 0.25, 0.25, 0.3, 0.42, 0.55, 0.66]
  return (
    <svg viewBox="-32 -32 64 64" className="size-16 shrink-0" aria-hidden="true">
      {spokes.map((opacity, i) => (
        <line
          key={i}
          y1="-26"
          y2="-14"
          stroke="#ccff00"
          strokeOpacity={opacity}
          strokeWidth="8"
          strokeLinecap="round"
          transform={`rotate(${i * 45})`}
        />
      ))}
    </svg>
  )
}

function StatusBar() {
  return (
    <div className="flex h-44 items-center justify-between pr-[98px] pl-[118px] text-white">
      <div className="flex items-center gap-3">
        <span className="text-[51px] leading-none font-semibold">12:09</span>
        <svg viewBox="0 0 40 40" className="size-10" aria-hidden="true">
          <path
            d="M37 1 2 17c-3 2-2 5 1 5h14c1 0 1 0 1 1v14c0 3 4 4 5 1L39 4c1-2 0-4-2-3z"
            fill="currentColor"
          />
        </svg>
      </div>
      <div className="flex items-center gap-[22px]">
        <svg viewBox="0 0 58 38" className="h-[38px] w-[58px]" aria-hidden="true">
          <rect y="23" width="10" height="14" rx="3" fill="#fff" />
          <rect x="16" y="16" width="10" height="21" rx="3" fill="#fff" />
          <rect x="32" y="8" width="10" height="29" rx="3" fill="#fff" />
          <rect x="48" width="10" height="37" rx="3" fill="#3a3a3c" />
        </svg>
        <svg viewBox="0 0 50 38" className="h-[38px] w-[50px]" aria-hidden="true">
          <path d="M25 0C15 0 6 4 0 10.500l5 5C10 10.500 17 7.500 25 7.500s15 3 20 8l5-5C44 4 35 0 25 0z" fill="#fff" />
          <path d="M25 13c-6.500 0-12 2.500-16.500 6.500l5 5C16.500 22 20.500 20 25 20s8.500 2 11.500 4.500l5-5C37 15.500 31.500 13 25 13z" fill="#fff" />
          <path d="M25 25.500c-3 0-5.500 1-7.500 3L25 37l7.500-8.500c-2-2-4.500-3-7.500-3z" fill="#fff" />
        </svg>
        <div className="flex items-center gap-[3px]">
          <div className="flex h-[41px] w-[75px] items-center justify-center gap-px overflow-hidden rounded-[13px] bg-linear-to-r from-[#34c759] from-80% to-[#555557] to-80%">
            <span className="text-[36px] leading-none font-bold">80</span>
            <svg viewBox="0 0 17 26" className="h-[26px] w-[17px]" aria-hidden="true">
              <path d="M12 0 0 14.500h7L5 26l12-15.500H9.500z" fill="#fff" />
            </svg>
          </div>
          <span className="h-3 w-1 rounded-r-full bg-[#48484a]" />
        </div>
      </div>
    </div>
  )
}

function Logo() {
  return (
    <div className="flex items-center gap-[18px]">
      <svg viewBox="0 0 84 58" className="h-[58px] w-[84px]" aria-hidden="true">
        <defs>
          <linearGradient id="flame" x1="0.6" y1="0" x2="0.35" y2="1">
            <stop offset="0.1" stopColor="#c4ffd4" />
            <stop offset="0.5" stopColor="#c8fb88" />
            <stop offset="0.8" stopColor="#dcff00" />
          </linearGradient>
        </defs>
        <path d="M2 30v11M8.500 28v15M15 27v17" stroke="#c6ec1c" strokeWidth="4" strokeLinecap="round" />
        <path d="M15 35.500h8" stroke="#c6ec1c" strokeWidth="3" />
        <path d="M69 27v17M75.500 28v15M82 30v11" stroke="#ececf0" strokeWidth="4" strokeLinecap="round" />
        <path d="M61 35.500h8" stroke="#ececf0" strokeWidth="3" />
        <path
          d="M43.500 0c1 11 6 15 12 22 4 4.500 7.500 9 7.500 15a21 21 0 0 1-42 0c0-4 1-8 3.500-11 1.500 3 4 4 6.500 3.500 3-.5 5-3 4-6C31 13 36 5 43.500 0z"
          fill="url(#flame)"
        />
      </svg>
      <span className="font-['Noto_Sans',sans-serif] text-[54px] leading-none font-extrabold tracking-[7px] text-[#f5f5f8]">
        <span className="text-[#ccff00]">FIT</span>INDER
      </span>
    </div>
  )
}

export default function App() {
  return (
    <div className="min-h-screen w-full bg-[#09090b] pb-[101px] font-['Inter',sans-serif]">
      <StatusBar />

      <header className="grid h-[220px] grid-cols-[1fr_auto_1fr] items-center px-[99px]">
        <span />
        <Logo />
        <button type="button" aria-label="Search" className="justify-self-end text-[#f5f5f8]">
          <IoSearch className="size-[66px]" />
        </button>
      </header>

      <main className="px-[72px] pt-3">
        <h1 className="text-[94px] leading-[96px] font-extrabold text-[#f5f5f8] [font-feature-settings:'cv11']">Map</h1>
        <p className="mt-7 text-[48px] leading-[60px] text-[#9b9b8f]">Facilities and sessions near you</p>

        <label className="mt-[53px] flex h-[126px] items-center gap-6 rounded-full border-[3px] border-[#32323d] bg-[#1c1c22] px-12 text-[#9b9b8f]">
          <IoSearch className="size-[54px] shrink-0" aria-hidden />
          <input
            type="text"
            aria-label="Find facilities"
            placeholder="Find facilities, gyms, tracks..."
            className="min-w-0 flex-1 bg-transparent text-[48px] text-white outline-none placeholder:text-[#9b9b8f] placeholder:opacity-100"
          />
        </label>

        <section
          aria-label="Nearby map"
          className="relative mt-12 overflow-hidden rounded-[48px] border-[3px] border-[#32323d] bg-[#f6f2e7]"
        >
          <CityMap />

          {GYMS.map((gym) => (
            <GymPin key={gym.id} gym={gym} />
          ))}
          <span
            style={at({ x: 904, y: 1821 })}
            className="absolute size-[66px] -translate-x-1/2 -translate-y-1/2 rounded-full border-[9px] border-white bg-[#0088ff] shadow-[0_4px_32px_rgba(60,50,30,0.35)]"
          />

          <div className="absolute bottom-[28px] left-7 flex items-end text-[#54534e]">
            <IoLogoApple className="size-10" aria-hidden />
            <span className="text-[44px] leading-none">Maps</span>
            <a href="#legal" className="ml-7 text-[30px] leading-9 text-[#54534e]/80 underline">
              Legal
            </a>
          </div>

          <div
            role="status"
            className="absolute bottom-12 left-12 flex h-[90px] items-center gap-[22px] rounded-[36px] border-[3px] border-[#32323d] bg-[#1c1c22] pr-[26px] pl-[22px] text-[36px] font-medium text-[#9b9b8f]"
          >
            <Spinner />
            Loading nearby gyms...
          </div>
        </section>
      </main>

      <nav
        aria-label="Main"
        className="mx-12 mt-[66px] grid h-[258px] grid-cols-5 rounded-full border-[3px] border-[#27272f] bg-[#1c1c22] px-3 pt-12"
      >
        {TABS.map(({ label, Icon, active }) => (
          <a
            key={label}
            href={`#${label.toLowerCase()}`}
            aria-current={active ? 'page' : undefined}
            className={`flex flex-col items-center text-[30px] leading-[36px] tracking-[1px] ${
              active ? 'font-bold text-[#ccff00]' : 'font-medium text-[#9b9b8f]'
            }`}
          >
            <Icon className="size-[66px]" aria-hidden />
            <span className="mt-6">{label}</span>
            {active && <span className="mt-6 size-3 rounded-full bg-[#ccff00]" />}
          </a>
        ))}
      </nav>
    </div>
  )
}
